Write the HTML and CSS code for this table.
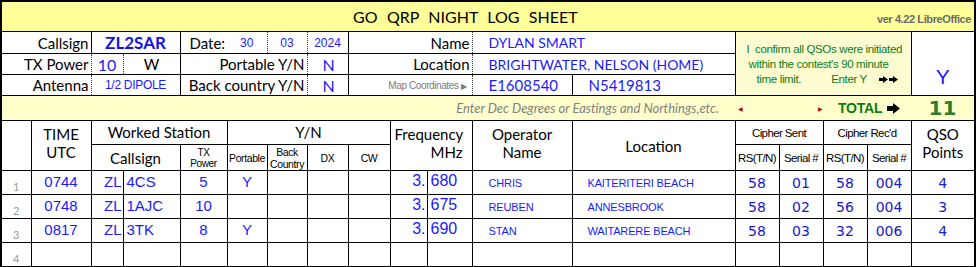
FILE: index.html
```html
<!DOCTYPE html>
<html>
<head>
<meta charset="utf-8">
<link rel="stylesheet" href="styles.css">
</head>
<body>
<table class="sheet">
  <colgroup>
    <col style="width:30px"><col style="width:60px"><col style="width:32px"><col style="width:57px">
    <col style="width:47px"><col style="width:40px"><col style="width:40px"><col style="width:41px">
    <col style="width:42px"><col style="width:37px"><col style="width:45px"><col style="width:100px">
    <col style="width:163px"><col style="width:44px"><col style="width:44px"><col style="width:44px">
    <col style="width:44px"><col style="width:64px">
  </colgroup>
  <tr class="r-title">
    <td colspan="18" class="title">
      <div class="title-bar">
        <span class="title-text">GO&nbsp; QRP&nbsp; NIGHT&nbsp; LOG&nbsp; SHEET</span>
        <span class="ver">ver 4.22 LibreOffice</span>
      </div>
    </td>
  </tr>
  <tr class="r-info">
    <td colspan="2" class="lbl dotr">Callsign</td>
    <td colspan="2" class="callsign">ZL2SAR</td>
    <td class="date-lbl nor">Date:</td>
    <td class="small-val nol dotr">30</td>
    <td class="small-val dotl dotr">03</td>
    <td class="small-val dotl">2024</td>
    <td colspan="3" class="lbl dotr">Name</td>
    <td colspan="2" class="val dotl">DYLAN SMART</td>
    <td colspan="4" rowspan="3" class="confirm">
      <div class="confirm-text">
        <div>I&nbsp; confirm all QSOs were initiated</div>
        <div class="cl2">within the contest's 90 minute</div>
        <div class="cl3">time limit.<span class="enter">Enter Y</span><span class="arrows"><svg width="9" height="7" viewBox="0 0 9 7"><path d="M0 2h4V0l5 3.5L4 7V5H0z" fill="#000"/></svg><svg width="9" height="7" viewBox="0 0 9 7"><path d="M0 2h4V0l5 3.5L4 7V5H0z" fill="#000"/></svg></span></div>
      </div>
    </td>
    <td rowspan="3" class="bigy">Y</td>
  </tr>
  <tr class="r-info">
    <td colspan="2" class="lbl dotr">TX Power</td>
    <td class="num-val dotl dotr">10</td>
    <td class="unit dotl">W</td>
    <td colspan="3" class="lbl dotr">Portable Y/N</td>
    <td class="yn dotl">N</td>
    <td colspan="3" class="lbl dotr">Location</td>
    <td colspan="2" class="val dotl">BRIGHTWATER, NELSON (HOME)</td>
  </tr>
  <tr class="r-info">
    <td colspan="2" class="lbl dotr">Antenna</td>
    <td colspan="2" class="antenna dotl">1/2 DIPOLE</td>
    <td colspan="3" class="lbl dotr">Back country Y/N</td>
    <td class="yn dotl">N</td>
    <td colspan="3" class="map dotr">Map Coordinates <span class="tri">▶</span></td>
    <td class="coord dotl">E1608540</td>
    <td class="coord">N5419813</td>
  </tr>
  <tr class="r-hint">
    <td colspan="13" class="hint nor">Enter Dec Degrees or Eastings and Northings,etc.</td>
    <td colspan="4" class="total-cell nol nor">
      <div class="total-bar">
        <span class="mark">◀</span>
        <span class="mark mark-r">▶</span>
        <span class="total">TOTAL</span>
        <svg class="total-arrow" width="13" height="11" viewBox="0 0 13 11"><path d="M0 3h6V0l7 5.5L6 11V8H0z" fill="#000"/></svg>
      </div>
    </td>
    <td class="total-num nol">11</td>
  </tr>
  <tr class="r-h1">
    <td rowspan="2"></td>
    <td rowspan="2" class="h-big h-top">TIME<br>UTC</td>
    <td colspan="3" class="h-big h-row1">Worked Station</td>
    <td colspan="4" class="h-big h-row1">Y/N</td>
    <td colspan="2" rowspan="2" class="h-big h-top freq-h"><div>Frequency</div><div class="mhz">MHz</div></td>
    <td rowspan="2" class="h-big h-top">Operator<br>Name</td>
    <td rowspan="2" class="h-big">Location</td>
    <td colspan="2" class="h-narrow">Cipher Sent</td>
    <td colspan="2" class="h-narrow">Cipher Rec'd</td>
    <td rowspan="2" class="h-big h-top">QSO<br>Points</td>
  </tr>
  <tr class="r-h2">
    <td colspan="2" class="h-big">Callsign</td>
    <td class="h-tiny">TX<br>Power</td>
    <td class="h-small">Portable</td>
    <td class="h-small">Back<br>Country</td>
    <td class="h-small">DX</td>
    <td class="h-small">CW</td>
    <td class="h-narrow">RS(T/N)</td>
    <td class="h-narrow">Serial #</td>
    <td class="h-narrow">RS(T/N)</td>
    <td class="h-narrow">Serial #</td>
  </tr>
  <tr class="r-data">
    <td class="rn">1</td>
    <td class="d">0744</td>
    <td class="d zl">ZL</td>
    <td class="d call">4CS</td>
    <td class="d">5</td>
    <td class="d">Y</td>
    <td></td><td></td><td></td>
    <td class="d fi">3.</td>
    <td class="d fd">680</td>
    <td class="dn op">CHRIS</td>
    <td class="dn loc">KAITERITERI BEACH</td>
    <td class="dc">58</td><td class="dc">01</td><td class="dc">58</td><td class="dc">004</td><td class="dc">4</td>
  </tr>
  <tr class="r-data">
    <td class="rn">2</td>
    <td class="d">0748</td>
    <td class="d zl">ZL</td>
    <td class="d call">1AJC</td>
    <td class="d">10</td>
    <td></td>
    <td></td><td></td><td></td>
    <td class="d fi">3.</td>
    <td class="d fd">675</td>
    <td class="dn op">REUBEN</td>
    <td class="dn loc">ANNESBROOK</td>
    <td class="dc">58</td><td class="dc">02</td><td class="dc">56</td><td class="dc">004</td><td class="dc">3</td>
  </tr>
  <tr class="r-data">
    <td class="rn">3</td>
    <td class="d">0817</td>
    <td class="d zl">ZL</td>
    <td class="d call">3TK</td>
    <td class="d">8</td>
    <td class="d">Y</td>
    <td></td><td></td><td></td>
    <td class="d fi">3.</td>
    <td class="d fd">690</td>
    <td class="dn op">STAN</td>
    <td class="dn loc">WAITARERE BEACH</td>
    <td class="dc">58</td><td class="dc">03</td><td class="dc">32</td><td class="dc">006</td><td class="dc">4</td>
  </tr>
  <tr class="r-data">
    <td class="rn">4</td>
    <td></td><td></td><td></td><td></td><td></td><td></td><td></td><td></td>
    <td></td><td></td><td></td><td></td><td></td><td></td><td></td><td></td><td></td>
  </tr>
</table>
</body>
</html>
```
FILE: styles.css
```css
html, body {
  margin: 0;
  padding: 0;
  background: #ffffff;
}

.sheet {
  border-collapse: collapse;
  table-layout: fixed;
  width: 976px;
  border: 2px solid #000;
  font-family: Lato, "Liberation Sans", sans-serif;
  color: #000;
}

.sheet td {
  border: 1px solid #000;
  padding: 0;
  overflow: hidden;
  white-space: nowrap;
  vertical-align: middle;
}

.dotr { border-right: 1px dotted #444 !important; }
.dotl { border-left: 1px dotted #444 !important; }
.nor { border-right: none !important; }
.nol { border-left: none !important; }

/* row heights */
.r-title { height: 30px; }
.r-info { height: 21px; }
.r-hint { height: 23px; }
.r-h1 { height: 24px; }
.r-h2 { height: 26px; }
.r-data { height: 24px; }

/* title */
.title { background: #ffff99; }
.title-bar {
  display: flex;
  align-items: flex-end;
  height: 29px;
}
.title-text {
  padding-left: 351px;
  font-size: 16px;
  line-height: 27px;
  letter-spacing: 0;
  word-spacing: 0.6px;
  align-self: center;
}
.ver {
  margin-left: auto;
  padding-right: 3px;
  padding-bottom: 6px;
  font-family: "Liberation Sans", sans-serif;
  font-weight: bold;
  font-size: 11px;
  letter-spacing: -0.4px;
  color: #6b6b6b;
}

/* info rows */
.lbl {
  text-align: right;
  padding-right: 2px !important;
  font-size: 15px;
}
.callsign {
  text-align: center;
  font-weight: bold;
  font-size: 17px;
  color: #1414e6;
}
.date-lbl {
  font-size: 15px;
  padding-left: 9px !important;
}
.small-val {
  text-align: center;
  font-family: "Liberation Sans", sans-serif;
  font-size: 12px;
  color: #1a1aff;
}
.val {
  font-size: 14px;
  color: #1a1aff;
  padding-left: 16px !important;
}
.coord {
  font-size: 15px;
  color: #1a1aff;
  padding-left: 16px !important;
}
.num-val {
  text-align: center;
  font-size: 16px;
  color: #1a1aff;
}
.unit {
  text-align: center;
  font-size: 15px;
}
.yn {
  font-size: 16px;
  color: #1a1aff;
  padding-left: 15px !important;
}
.antenna {
  text-align: center;
  font-family: "Liberation Sans", sans-serif;
  font-size: 12px;
  letter-spacing: -0.3px;
  color: #1a1aff;
}
.map {
  text-align: right;
  padding-right: 5px !important;
  font-family: "Liberation Sans", sans-serif;
  font-size: 10px;
  letter-spacing: -0.4px;
  color: #7a7a7a;
}
.tri { font-size: 8px; }

.confirm {
  background: #fcfcd0;
  vertical-align: top !important;
}
.confirm-text {
  padding-top: 10px;
  padding-left: 11px;
  font-family: "Liberation Sans", sans-serif;
  font-size: 11.5px;
  letter-spacing: -0.35px;
  line-height: 15px;
  color: #0b7d1e;
}
.cl2 { padding-left: 2px; }
.cl3 { padding-left: 10px; display: flex; align-items: center; }
.enter { margin-left: 30px; }
.arrows {
  margin-left: 12px;
  display: inline-flex;
  gap: 1px;
}

.bigy {
  text-align: center;
  vertical-align: bottom !important;
  padding-bottom: 6px !important;
  font-family: "Liberation Sans", sans-serif;
  font-size: 21px;
  color: #1a1aff;
}

/* hint row */
.r-hint td { background: #ffffcc; }
.hint {
  text-align: right;
  padding-right: 16px !important;
  font-style: italic;
  font-size: 13px;
  color: #808080;
}
.total-bar {
  display: flex;
  align-items: center;
  height: 22px;
}
.mark {
  font-size: 6px;
  color: #c00000;
  margin-left: 3px;
}
.mark-r { margin-left: 75px; }
.total {
  margin-left: 15px;
  font-family: "Liberation Sans", sans-serif;
  font-weight: bold;
  font-size: 14px;
  letter-spacing: -0.2px;
  color: #0a7d12;
}
.total-arrow { margin-left: 5px; }
.total-num {
  text-align: center;
  font-family: "DejaVu Sans", sans-serif;
  font-weight: bold;
  font-size: 20px;
  color: #2e7d2e;
}

/* headers */
.h-big {
  text-align: center;
  font-size: 15px;
  line-height: 18px;
}
.h-row1 { padding-bottom: 2px !important; }
.h-top {
  vertical-align: top !important;
  padding-top: 4px !important;
}
.freq-h { text-align: left !important; }
.freq-h div { padding-left: 4px; }
.freq-h .mhz { padding-left: 40px; }
.h-small, .h-tiny, .h-narrow {
  text-align: center;
  font-family: "Liberation Sans", sans-serif;
  font-size: 10.5px;
  letter-spacing: -0.4px;
  line-height: 12px;
}
.h-tiny { font-size: 10px; line-height: 11px; }
.h-narrow { font-size: 11.5px; letter-spacing: -0.6px; }

/* data */
.rn {
  vertical-align: bottom !important;
  text-align: center;
  padding-bottom: 1px !important;
  font-size: 11px;
  color: #999;
}
.d {
  text-align: center;
  font-family: "Liberation Sans", sans-serif;
  font-size: 15px;
  color: #1a1aff;
  padding-bottom: 3px !important;
}
.zl { text-align: right; padding-right: 1px !important; }
.call { text-align: left; padding-left: 3px !important; }
.fi { text-align: right; padding-right: 1px !important; font-size: 16px; }
.fd { text-align: left; padding-left: 3px !important; font-size: 16px; }
.dn {
  font-family: "Liberation Sans", sans-serif;
  font-size: 11px;
  letter-spacing: -0.15px;
  color: #1a1aff;
}
.op { padding-left: 16px !important; }
.loc { padding-left: 15px !important; }
.dc {
  text-align: center;
  font-family: "DejaVu Sans", sans-serif;
  font-size: 14px;
  color: #1a1acc;
}
```
